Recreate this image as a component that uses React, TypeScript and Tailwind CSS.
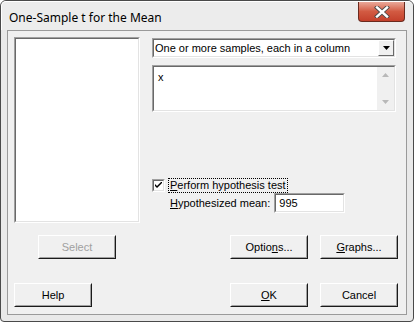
import React from "react";

const sunkenOuter = "border border-t-[#a0a0a0] border-l-[#a0a0a0] border-b-white border-r-white";
const sunkenInner = "border border-t-[#696969] border-l-[#696969] border-b-[#e3e3e3] border-r-[#e3e3e3]";

function Btn({ children, disabled, className = "" }: { children: React.ReactNode; disabled?: boolean; className?: string }) {
  return (
    <div className={`w-[78px] h-[24px] border border-t-white border-l-white border-b-[#1a1a1a] border-r-[#1a1a1a] ${className}`}>
      <div className="w-full h-full border border-t-[#f0f0f0] border-l-[#f0f0f0] border-b-[#a0a0a0] border-r-[#a0a0a0] flex items-center justify-center bg-[#f0f0f0]">
        <span className={disabled ? "text-[#a0a0a0]" : "text-black"}>{children}</span>
      </div>
    </div>
  );
}

export default function App() {
  return (
    <div
      className="w-[414px] h-[322px] bg-[#e9e9e9] border border-[#4a4a4a] rounded-t-[6px] rounded-b-[4px] flex flex-col overflow-hidden"
      style={{ fontFamily: '"Liberation Sans", Arial, sans-serif', fontSize: "11px" }}
    >
      {/* Title bar */}
      <div className="h-[29px] flex items-start relative border-t border-l border-white rounded-t-[5px] bg-[#ececec]">
        <div className="pl-[7px] pt-[7px] text-[12px] text-black" style={{ fontFamily: '"Noto Sans", "Open Sans", sans-serif' }}>
          One-Sample t for the Mean
        </div>
        <div className="ml-auto mr-[8px] w-[47px] h-[20px] rounded-b-[4px] border border-t-0 border-[#6b2a1e] bg-gradient-to-b from-[#e9a899] via-[#d25a42] to-[#c4402b] flex items-center justify-center">
          <svg width="16" height="12" viewBox="0 0 16 12">
            <path d="M3 1.5 L13 10.5 M13 1.5 L3 10.5" stroke="#4a4a4a" strokeWidth="4.2" strokeLinecap="square" />
            <path d="M3 1.5 L13 10.5 M13 1.5 L3 10.5" stroke="#ffffff" strokeWidth="2.4" strokeLinecap="square" />
          </svg>
        </div>
      </div>

      {/* Client area */}
      <div className="mx-[6px] mb-[6px] flex-1 border border-[#9a9a9a] bg-[#f0f0f0] pl-[6px] pt-[6px]">
        <div className="flex">
          {/* list box */}
          <div className={`w-[126px] h-[186px] ${sunkenOuter}`}>
            <div className={`w-full h-full bg-white ${sunkenInner}`} />
          </div>

          {/* right column */}
          <div className="ml-[12px] w-[244px] flex flex-col">
            {/* dropdown */}
            <div className={`mt-[1px] h-[20px] ${sunkenOuter}`}>
              <div className={`w-full h-full bg-white flex items-center ${sunkenInner}`}>
                <span className="pl-[1px] flex-1">One or more samples, each in a column</span>
                <div className="w-[16px] h-full border border-t-white border-l-white border-b-[#696969] border-r-[#696969] bg-[#f0f0f0] flex items-center justify-center">
                  <svg width="7" height="4" viewBox="0 0 7 4"><path d="M0 0 H7 L3.5 4 Z" fill="#000" /></svg>
                </div>
              </div>
            </div>

            {/* text box */}
            <div className={`mt-[7px] h-[47px] ${sunkenOuter}`}>
              <div className={`w-full h-full bg-white flex ${sunkenInner}`}>
                <span className="flex-1 pl-[4px] pt-[2px]">x</span>
                <div className="w-[17px] h-full bg-[#f0f0f0] flex flex-col items-center justify-between py-[6px]">
                  <svg width="7" height="4" viewBox="0 0 7 4"><path d="M0 4 H7 L3.5 0 Z" fill="#b8b8b8" /></svg>
                  <svg width="7" height="4" viewBox="0 0 7 4"><path d="M0 0 H7 L3.5 4 Z" fill="#b8b8b8" /></svg>
                </div>
              </div>
            </div>

            {/* checkbox row */}
            <div className="mt-[66px] flex items-center h-[15px]">
              <div className={`w-[13px] h-[13px] ${sunkenOuter}`}>
                <div className={`w-full h-full bg-white flex items-center justify-center ${sunkenInner}`}>
                  <svg width="7" height="7" viewBox="0 0 7 7"><path d="M0 2 L0 4 L2 6 L7 1 L7 -1 L2 4 Z" fill="#000" /></svg>
                </div>
              </div>
              <span className="ml-[3px] px-[1px] border border-dotted border-black leading-[13px]">
                <span className="underline">P</span>erform hypothesis test
              </span>
            </div>

            {/* hypothesized mean */}
            <div className="flex items-center">
              <span className="ml-[18px]">
                <span className="underline">H</span>ypothesized mean:
              </span>
              <div className={`ml-[4px] w-[71px] h-[20px] ${sunkenOuter}`}>
                <div className={`w-full h-full bg-white flex items-center pl-[3px] ${sunkenInner}`}>995</div>
              </div>
            </div>
          </div>
        </div>

        {/* button row 1 */}
        <div className="mt-[12px] flex">
          <Btn disabled className="ml-[24px]">Select</Btn>
          <Btn className="ml-[114px]">
            Optio<span className="underline">n</span>s...
          </Btn>
          <Btn className="ml-[12px]">
            <span className="underline">G</span>raphs...
          </Btn>
        </div>

        {/* button row 2 */}
        <div className="mt-[24px] flex">
          <Btn>Help</Btn>
          <Btn className="ml-[138px]">
            <span className="underline">O</span>K
          </Btn>
          <Btn className="ml-[12px]">Cancel</Btn>
        </div>
      </div>
    </div>
  );
}
